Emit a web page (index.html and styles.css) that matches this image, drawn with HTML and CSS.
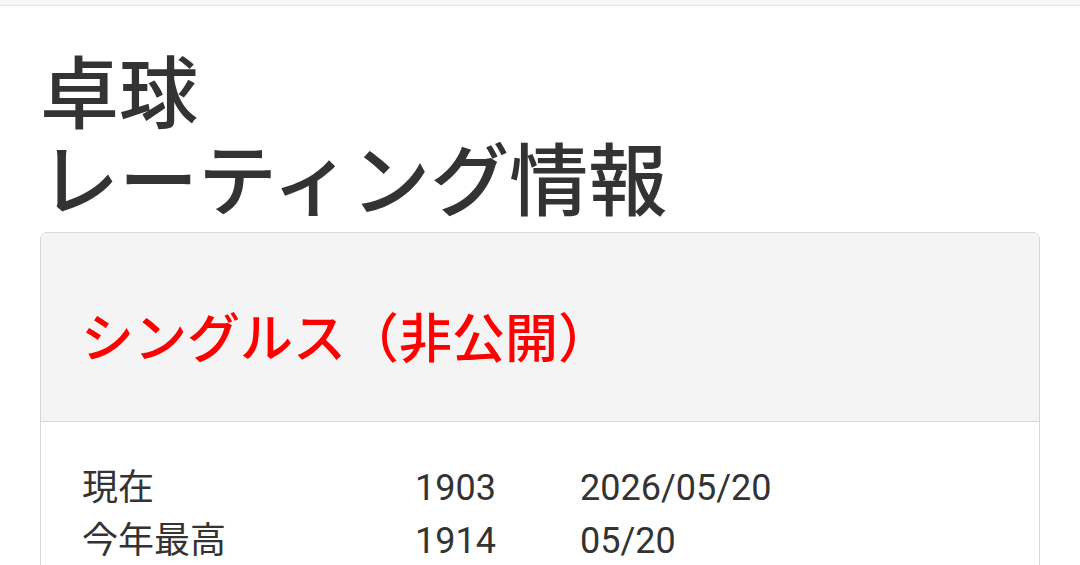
FILE: index.html
```html
<!DOCTYPE html>
<html lang="ja">
<head>
    <meta charset="UTF-8">
    <meta name="viewport" content="width=device-width, initial-scale=1.0">
    <title>卓球 レーティング情報</title>
    <link rel="stylesheet" href="styles.css">
</head>
<body>
    <div class="topbar"></div>

    <div class="container">
        <h1 class="page-title">卓球<br>レーティング情報</h1>

        <div class="card">
            <div class="card-header">
                <h2 class="card-title">シングルス（非公開）</h2>
            </div>
            <div class="card-body">
                <div class="rating-row">
                    <span class="label">現在</span>
                    <span class="value">1903</span>
                    <span class="date">2026/05/20</span>
                </div>
                <div class="rating-row">
                    <span class="label">今年最高</span>
                    <span class="value">1914</span>
                    <span class="date">05/20</span>
                </div>
            </div>
        </div>
    </div>
</body>
</html>
```

FILE: styles.css
```css
body {
    margin: 0;
    font-family: Roboto, 'Noto Sans CJK JP', sans-serif;
    color: #333;
    background-color: #fff;
}
.topbar {
    height: 5px;
    background-color: #f8f8f8;
    border-bottom: 1px solid #e4e4e4;
}
.container {
    padding: 0 40px;
}
.page-title {
    margin: 47px 0 5px 0;
    font-size: 79px;
    font-weight: 500;
    line-height: 87px;
    color: #333;
}
.card {
    border: 1px solid #d8d8d8;
    border-radius: 7px;
    overflow: hidden;
}
.card-header {
    height: 189px;
    box-sizing: border-box;
    display: flex;
    align-items: center;
    padding: 16px 0 0 40px;
    background-color: #f4f4f4;
    border-bottom: 1px solid #d8d8d8;
}
.card-title {
    margin: 0;
    font-size: 53px;
    font-weight: 500;
    color: #f00;
}
.card-body {
    padding: 40px 41px 20px;
}
.rating-row {
    display: grid;
    grid-template-columns: 333px 165px auto;
    font-size: 36px;
    line-height: 53px;
}
```
